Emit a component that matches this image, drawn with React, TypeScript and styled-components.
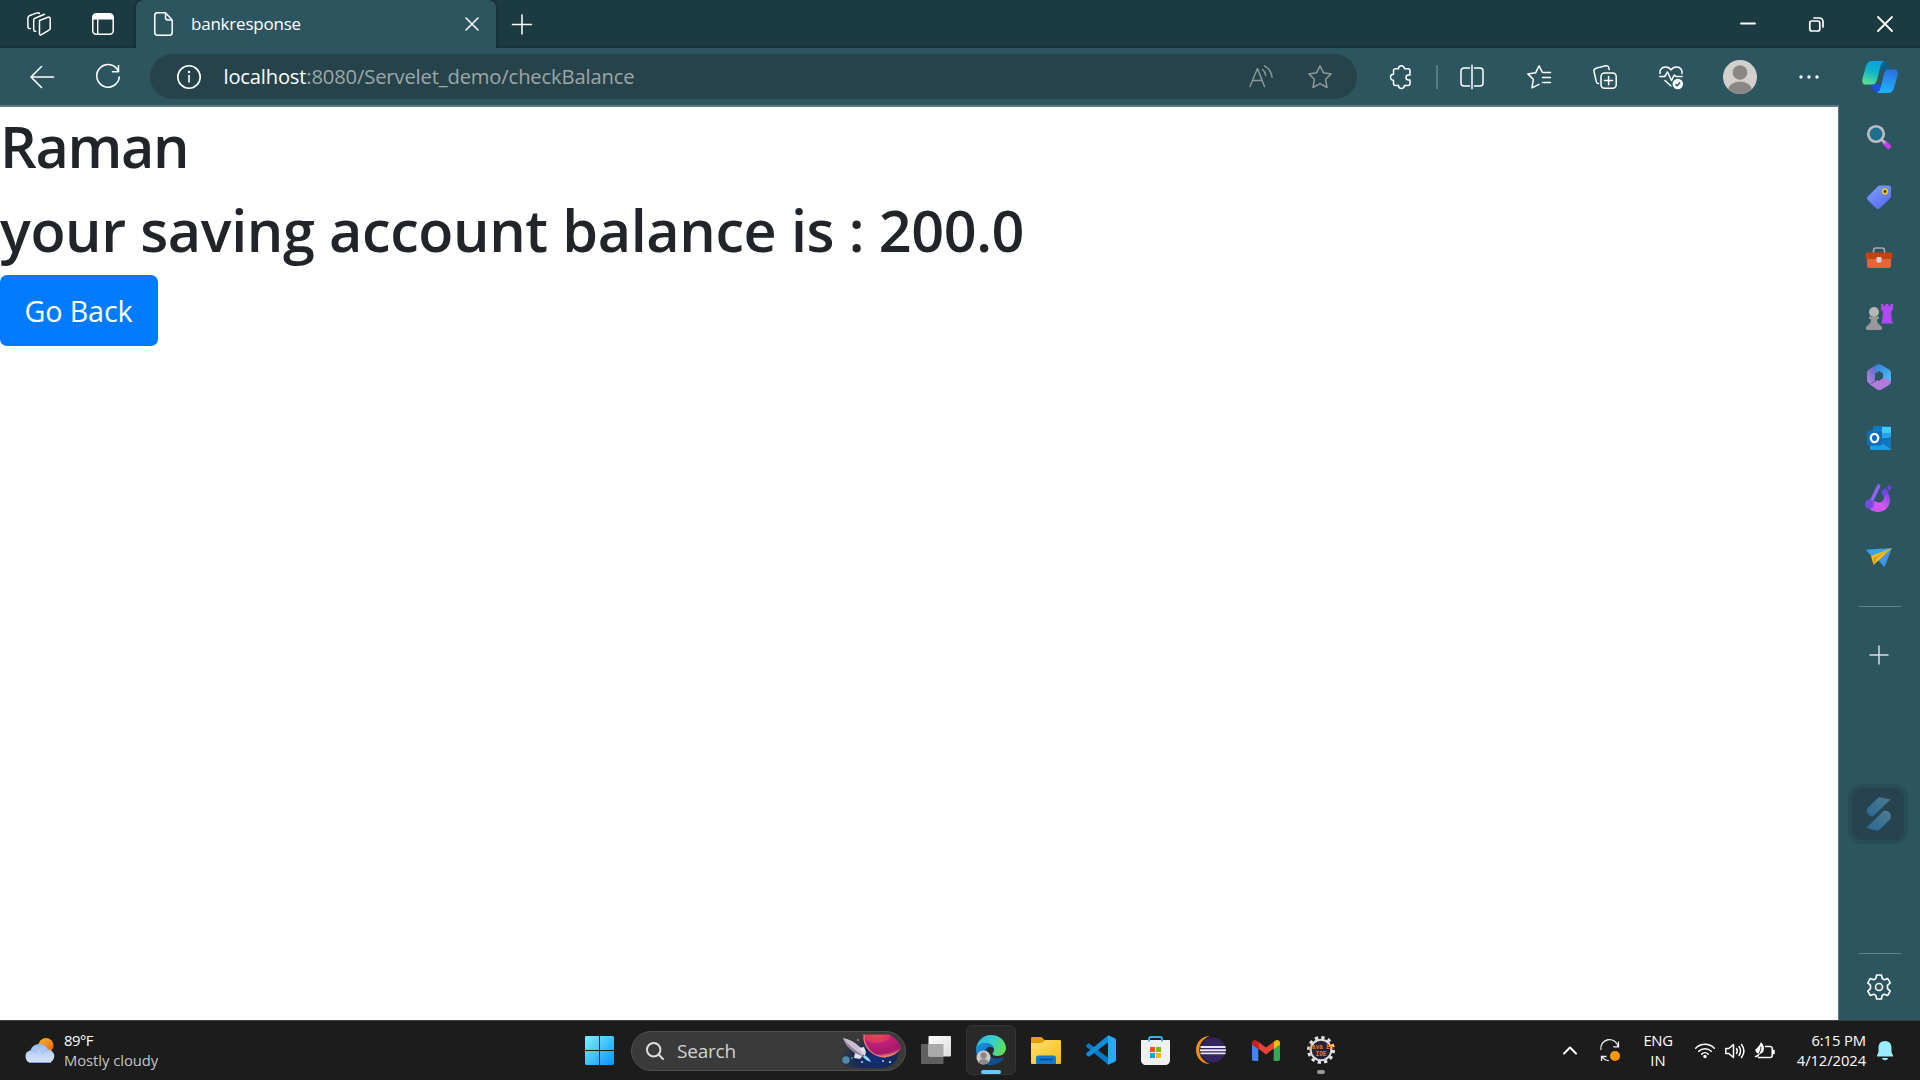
import React from "react";
import styled, { createGlobalStyle } from "styled-components";

const Global = createGlobalStyle`
  * { box-sizing: border-box; }
  body { margin: 0; overflow: hidden; background: #fff; font-family: "Open Sans", "Noto Sans", sans-serif; }
`;

const Screen = styled.div`
  width: 1920px;
  height: 1080px;
  display: flex;
  flex-direction: column;
  overflow: hidden;
`;

const Text = styled.span<{ $size: number; $color?: string; $ls?: number }>`
  font-size: ${(p) => p.$size}px;
  color: ${(p) => p.$color || "#fff"};
  letter-spacing: ${(p) => p.$ls || 0}px;
  white-space: nowrap;
`;

const Slot = styled.div<{ $w: number }>`
  width: ${(p) => p.$w}px;
  height: 100%;
  flex: none;
  display: flex;
  align-items: center;
  justify-content: center;
`;

const Svg = styled.svg<{ $w?: number; $h?: number }>`
  display: block;
  flex: none;
  width: ${(p) => p.$w || 24}px;
  height: ${(p) => p.$h || p.$w || 24}px;
  overflow: visible;
`;

const Line = styled(Svg)<{ $color?: string; $sw?: number }>`
  fill: none;
  stroke: ${(p) => p.$color || "#fff"};
  stroke-width: ${(p) => p.$sw || 1.5};
  stroke-linecap: round;
  stroke-linejoin: round;
`;

/* ---------- title bar ---------- */
const TitleBar = styled.header`
  height: 48px;
  flex: none;
  display: flex;
  background: linear-gradient(#1b3a41 0 44px, #17333a 48px);
`;

const Tab = styled.div`
  width: 360px;
  height: 48px;
  margin-left: 9px;
  padding: 0 18px;
  display: flex;
  align-items: center;
  background: #2d555f;
  border-radius: 8px 8px 0 0;
  box-shadow: 0 0 4px rgba(0, 0, 0, 0.4);
  clip-path: inset(0 -6px 0 -6px);
`;

const TabTitle = styled(Text)`
  flex: 1;
  margin-left: 18px;
  padding-bottom: 2px;
`;

const WindowControls = styled.div`
  display: flex;
  margin-left: auto;
`;

/* ---------- toolbar ---------- */
const Toolbar = styled.div`
  height: 57px;
  flex: none;
  display: flex;
  align-items: center;
  background: #2d555f;
`;

const AddressBar = styled.div`
  width: 1207px;
  height: 45px;
  margin: 0 11px 0 18px;
  padding: 0 7px 0 27px;
  display: flex;
  align-items: center;
  border-radius: 23px;
  background: #26434b;
`;

const Url = styled.div`
  flex: 1;
  margin-left: 22.5px;
  padding-bottom: 2px;
  display: flex;
`;

const Divider = styled.div`
  width: 2px;
  height: 24px;
  margin: 0 1px 0 2px;
  background: #5b7b83;
`;

/* ---------- body ---------- */
const Body = styled.div`
  height: 915px;
  flex: none;
  display: flex;
  background: #2d555f;
`;

const Page = styled.main`
  width: 1839px;
  border-top: 2px solid #5c7c85;
  border-right: 1px solid #5c7c85;
  background: #fff;
`;

const Heading = styled.h1<{ $size: number; $ls: number }>`
  margin: 0 0 12px;
  height: 72px;
  line-height: 79px;
  font-size: ${(p) => p.$size}px;
  font-weight: 570;
  letter-spacing: ${(p) => p.$ls}px;
  color: #212529;
  white-space: nowrap;
`;

const BackButton = styled.button`
  display: block;
  width: 158px;
  height: 71px;
  padding: 0 1px 0 0;
  border: 0;
  border-radius: 7px;
  background: #007bff;
  color: #fff;
  font: 400 28.8px "Open Sans", "Noto Sans", sans-serif;
  letter-spacing: -0.2px;
`;

const Sidebar = styled.aside`
  width: 81px;
  padding: 2px 2px 0 0;
  display: flex;
  flex-direction: column;
  align-items: center;
`;

const SideItem = styled.div<{ $h?: number }>`
  height: ${(p) => p.$h || 60.1}px;
  flex: none;
  display: flex;
  align-items: center;
  justify-content: center;
`;

const SideRule = styled.div<{ $mt: number }>`
  width: 42px;
  height: 1px;
  flex: none;
  margin-top: ${(p) => p.$mt}px;
  margin-left: 2px;
  background: #64838a;
`;

const Widget = styled.div`
  width: 60px;
  height: 60px;
  flex: none;
  margin-top: 80px;
  margin-right: 1px;
  border: 4px solid #294d58;
  border-radius: 14px;
  background: #26434f;
  display: flex;
  align-items: center;
  justify-content: center;
`;

/* ---------- taskbar ---------- */
const Taskbar = styled.footer`
  height: 60px;
  flex: none;
  display: flex;
  align-items: stretch;
  background: #1c1c1c;
  border-top: 1px solid #3b4040;
`;

const Weather = styled.div`
  width: 572px;
  padding-left: 25px;
  display: flex;
  align-items: center;
  gap: 9px;
`;

const Stack = styled.div<{ $align?: string }>`
  display: flex;
  flex-direction: column;
  align-items: ${(p) => p.$align || "flex-start"};
  line-height: 20px;
  padding-bottom: 2px;
`;

const SearchBox = styled.div`
  width: 275px;
  height: 40px;
  align-self: center;
  margin: 0 2px 0 4px;
  padding: 0 3px 0 14px;
  display: flex;
  align-items: center;
  border: 1px solid #505050;
  border-radius: 20px;
  background: #3a3a3a;
`;

const SearchLabel = styled(Text)`
  flex: 1;
  margin-left: 13px;
`;

const TaskButton = styled.div<{ $active?: boolean }>`
  position: relative;
  width: 50px;
  height: 50px;
  flex: none;
  margin: 4px 2.5px;
  border-radius: 6px;
  border: 1px solid ${(p) => (p.$active ? "#343434" : "transparent")};
  background: ${(p) => (p.$active ? "#292929" : "transparent")};
  display: flex;
  align-items: center;
  justify-content: center;
`;

const Indicator = styled.div<{ $w: number; $c: string }>`
  position: absolute;
  left: 50%;
  bottom: 0;
  width: ${(p) => p.$w}px;
  height: 4px;
  margin-left: -${(p) => p.$w / 2}px;
  border-radius: 2px;
  background: ${(p) => p.$c};
`;

const Tray = styled.div`
  margin-left: auto;
  display: flex;
  align-items: center;
`;

const Clock = styled(Stack)`
  width: 82px;
  margin-right: 11px;
`;

const Copilot = () => (
  <Svg $w={36} $h={32} viewBox="0 0 36 32">
    <defs>
      <linearGradient id="cp1" x1="0.6" y1="0" x2="0.3" y2="1"><stop stopColor="#0a9fe0" /><stop offset=".45" stopColor="#10b3c8" /><stop offset="1" stopColor="#5be08c" /></linearGradient>
      <linearGradient id="cp2" x1="0.6" y1="0" x2="0.4" y2="1"><stop stopColor="#2b6fe0" /><stop offset="1" stopColor="#1fb4ff" /></linearGradient>
    </defs>
    <path d="M18 0h4c3 0 4 2 4.700 5l1 4h-8l-4 1z" fill="#0b5f8c" />
    <path d="M8 23h8l4 2-3 7c-4 0-5-2-6-4z" fill="#1d4fd8" />
    <path d="M10 0h12c-2 1-3 3-4 7l-3 12c-1 3-2 4.500-5 4.500H4c-3 0-4.500-2-3.500-6L4 5c1-3.500 3-5 6-5z" fill="url(#cp1)" />
    <path d="M26 8.500h6c3 0 4.500 2 3.500 6L32 27c-1 3.500-3 5-6 5H15c2-1 3-3 4-7l3-12c1-3 2-4.500 4-4.500z" fill="url(#cp2)" />
  </Svg>
);

const SideSearch = () => (
  <Svg $w={24} viewBox="0 0 24 24">
    <path d="M17 17l6 6" stroke="#c43cf0" strokeWidth="5" />
    <path d="M15 15l3 3" stroke="#b8b8b8" strokeWidth="2.500" />
    <circle cx="9" cy="9" r="7.800" fill="#1f6f93" stroke="#bdbdbd" strokeWidth="2.600" />
  </Svg>
);
const Tag = () => (
  <Svg $w={24} viewBox="0 0 24 24">
    <defs><linearGradient id="tg" x1="0" y1="0" x2="0.6" y2="1"><stop stopColor="#7da4ff" /><stop offset="1" stopColor="#5b6cf5" /></linearGradient></defs>
    <path d="M13 .5h9c1.500 0 2 .7 2 2v8.500c0 1-.3 1.700-1 2.400L13 23c-1.300 1.200-3 1.200-4.200 0L1 15.200c-1.300-1.300-1.300-2.800 0-4L11 1.300c.6-.6 1.200-.8 2-.8z" fill="url(#tg)" />
    <circle cx="18" cy="6.500" r="2.300" fill="#443b2b" stroke="#f5c518" strokeWidth="1.700" />
  </Svg>
);
const Toolbox = () => (
  <Svg $w={28} $h={21} viewBox="0 0 28 21">
    <path d="M8.500 6V3.500c0-1.600.8-2.500 2.500-2.500h6c1.700 0 2.500.9 2.500 2.500V6" fill="none" stroke="#a9a9a9" strokeWidth="1.600" />
    <path d="M2 10h24v8.500c0 1.500-.8 2.500-2.500 2.500h-19C2.800 21 2 20 2 18.500z" fill="#ea6239" />
    <rect x="0.500" y="5.500" width="27" height="6.500" rx="1.500" fill="#c6420f" />
    <rect x="11.500" y="10" width="5" height="5.500" rx="1" fill="#d0d0d0" />
  </Svg>
);
const Chess = () => (
  <Svg $w={28} viewBox="0 0 28 28">
    <path d="M16 1h2.500v2h2V1h3v2h2V1H28v5.500l-2 2 .8 9 1.200 3H16l1.200-3 .8-9-2-2z" fill="#b048f5" />
    <circle cx="9" cy="9" r="5" fill="#b5b5b5" />
    <path d="M4 13.500h10v2l-2 1c0 3 1 4 4 6.500 1.300 1 1.500 4-.5 4h-13c-2 0-1.800-3-.5-4 3-2.500 4-3.500 4-6.500l-2-1z" fill="#999" />
  </Svg>
);
const Office = () => (
  <Svg $w={24} $h={26} viewBox="0 0 24 26">
    <defs>
      <linearGradient id="of1" x1="0" y1="0" x2="1" y2="1"><stop stopColor="#3a7bd5" /><stop offset="1" stopColor="#48c2f7" /></linearGradient>
      <linearGradient id="of2" x1="0" y1="1" x2="1" y2="0"><stop stopColor="#b488e0" /><stop offset="1" stopColor="#4d5fc4" /></linearGradient>
    </defs>
    <path d="M12 0c-1.500.3-3 1-4 2.300V17l-5 3-1.500-1C.5 18 0 17.200 0 16V9c0-1.600.7-2.800 2-3.600L9.500.8z" fill="url(#of2)" />
    <path d="M8 17.500l8-4.500 8-4.500v8.700c0 1.700-.7 2.900-2 3.700l-7.500 4.500c-1.500.8-3 .8-4.500 0L1.500 19.500C4 20.500 6 19 8 17.500z" fill="#b17adb" />
    <path d="M9.500.8C11 0 12.500 0 14 .8l8 4.600c1.300.8 2 2 2 3.600v6c0 1-.4 1.500-.8 2L16 13V9.500l-4-2.300-4 2.300V3c0-1 .5-1.700 1.500-2.200z" fill="url(#of1)" />
    <path d="M12 7.300l4 2.500V14l-4 3-4-2V9.800z" fill="#2d555f" />
  </Svg>
);
const Outlook = () => (
  <Svg $w={24} viewBox="0 0 24 24">
    <rect x="6" y="0" width="18" height="19" rx="1.500" fill="#0a78c2" />
    <path d="M6 4h9v7H6z" fill="#1598e0" /><path d="M15 1h9v6h-9z" fill="#43c8fa" /><path d="M15 7h9v5h-9z" fill="#22a5ea" />
    <path d="M3 23V12l12 4 9-5v11.500c0 1-.5 1.500-1.500 1.500H4z" fill="#1b9de2" /><path d="M11 15l13 8V11z" fill="#0f69ad" opacity=".75" />
    <rect x="0" y="4.500" width="15" height="15" rx="1.500" fill="#0f6cbd" />
    <ellipse cx="7.500" cy="12" rx="3.700" ry="4.100" fill="none" stroke="#fff" strokeWidth="2.300" />
  </Svg>
);
const Designer = () => (
  <Svg $w={27} $h={28} viewBox="0 0 27 28">
    <defs><linearGradient id="ds" x1="1" y1="0" x2="0" y2="1"><stop stopColor="#7645e8" /><stop offset=".5" stopColor="#d457f0" /><stop offset="1" stopColor="#c252ee" /></linearGradient></defs>
    <path d="M18.500 11c1 2.500.5 5-1.500 6.500-2.500 1.700-5 1-7-.5L2 21c1.500 4.300 6 7 11 7 7 0 12-5.500 12-12 0-3-1-5.500-2.500-7.500z" fill="url(#ds)" />
    <path d="M13.700 2L6 18" stroke="#8d63f5" strokeWidth="3.600" strokeLinecap="round" />
    <circle cx="4.500" cy="20" r="4.500" fill="#7a48e2" />
    <path d="M16 8l4-4 4 4-5 5z" fill="#7147e3" /><path d="M21.500 3.500l3-2.500 2.500 3-3 2.500z" fill="#6d43e0" />
  </Svg>
);
const Plane = () => (
  <Svg $w={26} $h={19} viewBox="0 0 26 19">
    <path d="M0 1.700L26 0 6 9z" fill="#35a5ed" />
    <path d="M26 0L10 10l8.500 9z" fill="#3f95e8" />
    <path d="M26 0L5 8l2.500 9z" fill="#f6bd1c" /><path d="M7.500 17L10 10 26 0 8 10z" fill="#cd8712" />
  </Svg>
);
const SIDE_APPS = [SideSearch, Tag, Toolbox, Chess, Office, Outlook, Designer, Plane];

const WeatherIcon = () => (
  <Svg $w={30} $h={25} viewBox="0 0 30 25">
    <defs>
      <linearGradient id="sn" x1="0" y1="0" x2=".6" y2="1"><stop stopColor="#f7b32b" /><stop offset="1" stopColor="#ee6a12" /></linearGradient>
      <linearGradient id="cl" x1="0" y1="0" x2="0" y2="1"><stop stopColor="#96b8ee" /><stop offset=".6" stopColor="#c3d7f7" /><stop offset="1" stopColor="#d9e5fa" /></linearGradient>
    </defs>
    <circle cx="21" cy="7.500" r="7.500" fill="url(#sn)" />
    <path d="M6.500 25a6.500 6.500 0 01-1-12.800A9.500 9.500 0 0123 11.500 6.800 6.800 0 0123.500 25z" fill="url(#cl)" />
    <path d="M17 16a7 7 0 016-4.500M6 12.500c3 0 5 1 6.500 3" fill="none" stroke="#8fb0e4" strokeWidth=".8" />
    <path d="M4 24.500h22" stroke="#7e9fdf" strokeWidth="1" />
  </Svg>
);

const StartIcon = () => (
  <Svg $w={29} viewBox="0 0 29 29">
    <defs><linearGradient id="wn" gradientUnits="userSpaceOnUse" x1="0" y1="0" x2="29" y2="29"><stop stopColor="#7cf0ff" /><stop offset="1" stopColor="#0a93fb" /></linearGradient></defs>
    <path d="M1 0h13v14H0V1zM15 0h13l1 1v13H15zM0 15h14v14H1l-1-1zM15 15h14v13l-1 1H15z" fill="url(#wn)" />
  </Svg>
);

const SpaceArt = () => (
  <Svg $w={62} $h={34} viewBox="0 0 62 34">
    <defs>
      <radialGradient id="sky" cx=".6" cy=".7" r=".6"><stop stopColor="#102e7c" /><stop offset=".55" stopColor="#152a5c" /><stop offset="1" stopColor="#152a5c" stopOpacity="0" /></radialGradient>
      <radialGradient id="pl" cx=".35" cy="0" r="1"><stop stopColor="#e0504c" /><stop offset=".35" stopColor="#d83564" /><stop offset=".4" stopColor="#c02076" /><stop offset=".85" stopColor="#a3186e" /><stop offset="1" stopColor="#f58a62" /></radialGradient>
    </defs>
    <path d="M0 0h42a17 17 0 010 34H0z" fill="url(#sky)" />
    <path d="M24 .5h25c6 3 10 7 12 13-2 5-8 9-15 9.500C33 23 23 13 24 .5z" fill="url(#pl)" />
    <path d="M24 .5c-1 13 9 22.500 22 22.500" fill="none" stroke="#f07a78" strokeWidth="1.300" />
    <path d="M3 4c6 1 12 4 17 9l5 6-4 5-6-5C9 15 5 10 3 4z" fill="#c9bfcf" />
    <path d="M3 4c3 6 7 11 12 15l6 5 2-2C15 16 8 11 3 4z" fill="#8a7b94" />
    <path d="M19 14l5-1 2 5-1 4zM15 19l-1 5 6 1 2-3z" fill="#e4dfe8" />
    <path d="M24 21c3 1 5 3 7 7-4-1-6-3-8-5z" fill="#8edcff" />
    <circle cx="6" cy="26" r="3.700" fill="#4e8cae" />
    <g fill="#d8d8e8"><circle cx="22" cy="28" r="1" /><circle cx="43" cy="27" r=".9" /><circle cx="50" cy="28" r="1.100" /><circle cx="12" cy="24" r=".7" /><circle cx="18" cy="6" r=".8" /></g>
  </Svg>
);

const TaskView = () => (
  <Svg $w={30} $h={28} viewBox="0 0 30 28">
    <defs><linearGradient id="tv" x1="0" y1="0" x2="1" y2="1"><stop stopColor="#fff" /><stop offset="1" stopColor="#dcdcdc" /></linearGradient></defs>
    <rect x="0" y="8" width="22.500" height="20" rx="1" fill="#606060" /><rect x="7.500" y="0" width="22.500" height="20.500" rx="1" fill="url(#tv)" />
    <path d="M7.500 8h15v12.500h-15z" fill="#aaa" />
  </Svg>
);
const EdgeIcon = () => (
  <Svg $w={30} viewBox="0 0 30 30">
    <defs>
      <linearGradient id="e1" x1="0" y1=".3" x2="1" y2=".6"><stop stopColor="#29b6ed" /><stop offset=".5" stopColor="#3bccd0" /><stop offset="1" stopColor="#62e04e" /></linearGradient>
      <linearGradient id="e2" x1="0" y1="0" x2=".6" y2="1"><stop stopColor="#1a9ce8" /><stop offset="1" stopColor="#0f58a8" /></linearGradient>
    </defs>
    <path d="M0 14C1 6 7 0 15 0c9 0 15 6.500 15 13 0 5-4 8-8.500 8-3.500 0-5-1.200-5-2.300 0-.8 1.500-1.700 1.500-4C18 11 14 8 9 8c-4 0-7 2-9 6z" fill="url(#e1)" />
    <path d="M0 14c2-4 5.500-6 9-6 5 0 9 3 9 6.700-.2-1.700-2-2.700-4-2.700-3.500 0-5.500 3-5.500 6.500 0 5 4 9.500 9.500 11.200-1 .2-2 .3-3 .3C6.500 30 0 23.500 0 14z" fill="url(#e2)" />
    <path d="M11 13c-1.500 1.500-2.500 3.500-2.500 5.500 0 6 5 10 9.500 11.200 4-1 7.500-3 9.700-6.500.5-.8-.2-1.300-.8-1C20 25.500 11 23 11 13z" fill="#124f91" />
    <circle cx="7.500" cy="22.500" r="7" fill="#cbc9c7" /><circle cx="7.500" cy="20.500" r="3.200" fill="#8b8886" /><path d="M2.500 27c1.500-4 8.500-4 10 0-2.500 3.200-7.500 3.200-10 0z" fill="#8b8886" />
  </Svg>
);
const Explorer = () => (
  <Svg $w={30} $h={27} viewBox="0 0 30 27">
    <defs><linearGradient id="fx" x1="0" y1="0" x2="1" y2="1"><stop stopColor="#ffdf70" /><stop offset="1" stopColor="#fbb917" /></linearGradient></defs>
    <path d="M0 1.500C0 .5.500 0 1.500 0h9l3 3v6H0z" fill="#e2a006" />
    <path d="M0 6h11l3-3h14.500c1 0 1.500.5 1.500 1.500v21c0 1-.5 1.500-1.500 1.500h-27C.5 27 0 26.500 0 25.500z" fill="url(#fx)" />
    <path d="M5 27v-6c0-1.500 1-2.500 2.500-2.500h15c1.500 0 2.500 1 2.500 2.500v6z" fill="#0f78cf" /><path d="M9 22.500h12" stroke="#064a8c" strokeWidth="1.300" strokeLinecap="round" />
  </Svg>
);
const VsCode = () => (
  <Svg $w={30} viewBox="0 0 30 30">
    <path d="M0 10.500l2-1.800c.6-.5 1.200-.4 1.700 0L22.500 23v7L.3 11.800C-.1 11.400-.2 10.900 0 10.500z" fill="#0879c4" />
    <path d="M0 19.500l2 1.800c.6.500 1.200.4 1.700 0L22.500 7V0L.3 18.200c-.4.400-.5.900-.3 1.300z" fill="#118ddb" />
    <path d="M22 .2L28.500 3c1 .5 1.500 1.200 1.500 2.200v19.600c0 1-.5 1.700-1.500 2.200L22 29.800z" fill="#2aa9f3" />
  </Svg>
);
const Store = () => (
  <Svg $w={29} viewBox="0 0 29 29">
    <path d="M1 4h27c.7 0 1 .3 1 1v19c0 3-2 5-5 5H5c-3 0-5-2-5-5V5c0-.7.3-1 1-1z" fill="#f1f1f1" />
    <path d="M8 5.500V3c0-1.300.7-2 2-2h9c1.300 0 2 .7 2 2v2.500" fill="none" stroke="#30b5ea" strokeWidth="1.900" />
    <path d="M9 11h5v5H9z" fill="#f25022" /><path d="M15 11h5v5h-5z" fill="#7fba00" /><path d="M9 17h5v5H9z" fill="#00a4ef" /><path d="M15 17h5v5h-5z" fill="#ffb900" />
  </Svg>
);
const Eclipse = () => (
  <Svg $w={30} $h={28} viewBox="0 0 30 28">
    <path d="M14 0C6 0 0 6 0 14s6 14 14 14C7 25.500 3.300 20 3.300 14S7 2.500 14 0z" fill="#f28c1c" />
    <circle cx="17" cy="14" r="12.500" fill="#33245f" />
    <path d="M4.500 11h25M4 14.200h26M4.500 17.400h25" stroke="#e6e4ee" strokeWidth="1.900" />
  </Svg>
);
const Gmail = () => (
  <Svg $w={28} $h={21} viewBox="0 0 28 21">
    <path d="M0 4l6.300 4.500V21H2c-1.300 0-2-.8-2-2z" fill="#4285f4" /><path d="M28 4l-6.300 4.500V21H26c1.300 0 2-.8 2-2z" fill="#34a853" />
    <path d="M6.300 8.500V1.800L14 7.600l7.700-5.800v6.700L14 14.500z" fill="#ea4335" />
    <path d="M0 4V3c0-2.500 2.800-4 4.900-2.300l1.400 1.100v7.400L0 4.500z" fill="#c5221f" /><path d="M28 4V3c0-2.500-2.800-4-4.900-2.300l-1.400 1.100v7.400L28 4.500z" fill="#fbbc04" />
  </Svg>
);
const JavaEE = () => (
  <Svg $w={28} viewBox="0 0 28 28">
    <circle cx="14" cy="14" r="12.500" fill="none" stroke="#e5e5e5" strokeWidth="3" strokeDasharray="3.270 3.270" />
    <circle cx="14" cy="14" r="10.300" fill="#282036" stroke="#dcdcdc" strokeWidth="2" />
    <g fontFamily="Liberation Mono, monospace" fontWeight="700" fill="#e77a1c" textAnchor="middle"><text x="14" y="13" fontSize="7" textLength="25" lengthAdjust="spacingAndGlyphs">Java EE</text><text x="14" y="19.500" fontSize="7" textLength="11" lengthAdjust="spacingAndGlyphs">IDE</text></g>
  </Svg>
);

const dim = "#8d9698";

export default function App() {
  return (
    <>
      <Global />
      <Screen>
        <TitleBar>
          <Slot $w={78}>
            <Line viewBox="0 0 24 24">
              <path d="M12.500 8.500l8.500-3.300c1.300-.5 2.200.2 2.200 1.400v9.600c0 .9-.4 1.500-1.200 1.900l-7.500 4.600c-1.100.7-2 .1-2-1z" />
              <path d="M8.800 19.300c-1 .2-2.100-.1-2.100-1.600V8.300c0-1 .5-1.700 1.300-2.100l9.500-3.900M3.200 16.500c-1.500.2-2.300-.5-2.300-1.900V6c0-1 .4-1.700 1.300-2.200L10 .9c1-.4 1.800-.3 2.500.5" />
            </Line>
          </Slot>
          <Slot $w={49}>
            <Svg $w={22} viewBox="0 0 22 22">
              <rect x=".8" y=".8" width="20.400" height="20.400" rx="3.500" fill="none" stroke="#fff" strokeWidth="1.500" />
              <path d="M1 6.500V4a3 3 0 013-3h14a3 3 0 013 3v2.500z" fill="#fff" /><path d="M5.700 6v15" stroke="#fff" strokeWidth="1.400" />
            </Svg>
          </Slot>
          <Tab>
            <Line $w={19} $h={24} viewBox="0 0 19 24"><path d="M11.500.8H3.500C1.800.8.8 1.800.8 3.500v17c0 1.700 1 2.700 2.700 2.700h12c1.700 0 2.700-1 2.700-2.700V8z M11.500.8V5.500C11.500 7.200 12.300 8 14 8h4.200" /></Line>
            <TabTitle $size={17} $ls={-0.22}>bankresponse</TabTitle>
            <Line $w={12} viewBox="0 0 12 12"><path d="M0 0l12 12M12 0L0 12" /></Line>
          </Tab>
          <Slot $w={52}><Line $w={20} $h={19} viewBox="0 0 20 20" $sw={1.6}><path d="M10 0v20M0 10h20" /></Line></Slot>
          <WindowControls>
            <Slot $w={69}><Line $w={14} viewBox="0 0 14 14" $sw={1.8}><path d="M0 6.500h14" /></Line></Slot>
            <Slot $w={68}><Line $w={15} viewBox="0 0 15 15" $sw={1.7}><rect x=".8" y="4" width="10" height="10" rx="2" /><path d="M5 1h5.500A3.500 3.500 0 0114 4.500V10" /></Line></Slot>
            <Slot $w={70}><Line $w={14} viewBox="0 0 14 14" $sw={1.8}><path d="M0 0l14 14M14 0L0 14" /></Line></Slot>
          </WindowControls>
        </TitleBar>
        <Toolbar>
          <Slot $w={84}><Line viewBox="0 0 24 24" $sw={1.6}><path d="M23.500 12H1M11.500 1.500L1 12l10.500 10.500" /></Line></Slot>
          <Slot $w={48}><Line viewBox="0 0 24 24" $sw={1.6}><path d="M22.500 6.500A11.300 11.300 0 1023.300 12M22.500.8v6h-6" /></Line></Slot>
          <AddressBar>
            <Line viewBox="0 0 24 24" $sw={1.6}><circle cx="12" cy="12" r="11.200" /><path d="M12 10.500v6.500" /><circle cx="12" cy="7" r=".5" /></Line>
            <Url><Text $size={20.2} $ls={-0.2}>localhost</Text><Text $size={20.2} $ls={-0.15} $color="#9ea6a8">:8080/Servelet_demo/checkBalance</Text></Url>
            <Slot $w={59}><Line $color={dim} viewBox="0 0 24 24"><path d="M1 21.500L8.500 3.500 15.500 21.500M3.800 15.500h9.300M13.500 4.500c2 1.500 3 3.500 3.200 6M15.500.8c4.500 2.500 7 6.500 7.500 11.500" /></Line></Slot>
            <Slot $w={60}><Line $color={dim} viewBox="0 0 24 24"><path d="M12 .8l3.500 7 7.700 1.100-5.600 5.400 1.400 8.200-7-3.900-7 3.900 1.400-8.200L.8 8.900l7.700-1.100z" /></Line></Slot>
          </AddressBar>
          <Slot $w={66}><Line viewBox="0 0 24 24"><path d="M9.500 3.800a3 3 0 016 0h3.500a2 2 0 012 2v4.200h-1.500a2.500 2.500 0 000 5H21v3.500a2 2 0 01-2 2h-3.500a3 3 0 01-6 0H6.500a2 2 0 01-2-2V15.300a3 3 0 010-6V5.800a2 2 0 012-2z" /></Line></Slot>
          <Divider />
          <Slot $w={66}><Line viewBox="0 0 24 24"><path d="M9.500 3H4a3 3 0 00-3 3v12a3 3 0 003 3h5.500M14.500 3H20a3 3 0 013 3v12a3 3 0 01-3 3h-5.500M12 .3v23.400" /></Line></Slot>
          <Slot $w={68}><Line viewBox="0 0 24 24"><path d="M23.500 7.500H15.500L12 .8 8.600 7.800.8 8.900l5.500 5.400L5 22.800l7-3.500M15.500 12.500h8M15.500 17.500h8" /></Line></Slot>
          <Slot $w={64}><Line viewBox="0 0 24 24"><rect x="8" y="8" width="15.200" height="15.200" rx="3.500" /><path d="M15.600 11.500v8.200M11.500 15.600h8.200M5.500 18.500c-1.200.2-1.900-.5-2.200-1.800L1 6.500C.7 4.900 1.500 3.800 3 3.300l9.500-2.500c1.600-.4 2.900.3 3.300 1.800l.4 2" /></Line></Slot>
          <Slot $w={67}><Line viewBox="0 0 24 24"><path d="M1 8.500C.5 5 2.500 2 6.300 2 9 2 11 3.200 12 5c1-1.800 3-3 5.700-3 3.800 0 5.800 3 5.300 6.500M.8 11.500h5l2.700-4.500 4 8.500 2.700-5.500 1.800 1.500h6M6 15.500l6 5.500" /><circle cx="18.800" cy="19" r="4.500" fill="#fff" /><path d="M16.800 19.700l1.300 1 2.700-3" stroke="#2d555f" /></Line></Slot>
          <Slot $w={72}><Svg $w={34} viewBox="0 0 34 34"><defs><clipPath id="av"><circle cx="17" cy="17" r="17" /></clipPath></defs><g clipPath="url(#av)"><path d="M0 0h34v34H0z" fill="#d2d0ce" /><circle cx="17" cy="12.500" r="7.300" fill="#8a8886" /><ellipse cx="17" cy="31" rx="12" ry="9.500" fill="#8a8886" /></g></Svg></Slot>
          <Slot $w={66}><Svg $w={20} $h={4} viewBox="0 0 20 4"><g fill="#fff"><circle cx="2" cy="2" r="1.700" /><circle cx="10" cy="2" r="1.700" /><circle cx="18" cy="2" r="1.700" /></g></Svg></Slot>
          <Slot $w={76}><Copilot /></Slot>
        </Toolbar>
        <Body>
          <Page>
            <Heading $size={57.5} $ls={-1.3}>Raman</Heading>
            <Heading $size={57.5} $ls={-0.38}>your saving account balance is : 200.0</Heading>
            <BackButton>Go Back</BackButton>
          </Page>
          <Sidebar>
            {SIDE_APPS.map((Item, i) => <SideItem key={i}><Item /></SideItem>)}
            <SideRule $mt={18} />
            <SideItem $h={97}><Line $w={18} viewBox="0 0 18 18" $color="#d5dddf"><path d="M9 0v18M0 9h18" /></Line></SideItem>
            <Widget>
              <Svg $w={25} $h={34} viewBox="0 0 25 34">
                <defs><linearGradient id="wg" x1="1" y1="0" x2="0" y2="1"><stop stopColor="#4e7c8e" /><stop offset="1" stopColor="#2a6896" /></linearGradient></defs>
                <path d="M13 0l11.500 2.500L7 19.500C2 19.500-1 14 2 10.500z" fill="url(#wg)" /><path d="M18 13.500c6 0 9 5 5.500 9.500L12 34 0 31z" fill="url(#wg)" />
              </Svg>
            </Widget>
            <SideRule $mt={109} />
            <SideItem $h={66}>
              <Line $w={26} viewBox="0 0 26 26" $sw={1.6}>
                <circle cx="13" cy="13" r="3.500" />
                <path d="M10.600 1h4.800l.8 3.600 2 1.100 3.600-1.100 2.400 4.200-2.700 2.600v3.200l2.700 2.600-2.400 4.200-3.600-1.100-2 1.100-.8 3.600h-4.800l-.8-3.600-2-1.100-3.600 1.100-2.400-4.200 2.700-2.600v-3.200L1.800 8.800l2.400-4.200 3.600 1.100 2-1.100z" />
              </Line>
            </SideItem>
          </Sidebar>
        </Body>
        <Taskbar>
          <Weather>
            <WeatherIcon />
            <Stack><Text $size={14.8} $ls={-0.5}>89°F</Text><Text $size={14.8} $ls={-0.05} $color="#c4c4c4">Mostly cloudy</Text></Stack>
          </Weather>
          <Slot $w={55}><StartIcon /></Slot>
          <SearchBox>
            <Line $w={18} viewBox="0 0 18 18" $sw={2} $color="#dedede"><circle cx="7.700" cy="7.700" r="6.700" /><path d="M12.500 12.500L17 17" /></Line>
            <SearchLabel $size={19} $color="#d2d2d2" $ls={-0.2}>Search</SearchLabel>
            <SpaceArt />
          </SearchBox>
          <TaskButton><TaskView /></TaskButton>
          <TaskButton $active><EdgeIcon /><Indicator $w={20} $c="#60cdff" /></TaskButton>
          <TaskButton><Explorer /></TaskButton>
          <TaskButton><VsCode /></TaskButton>
          <TaskButton><Store /></TaskButton>
          <TaskButton><Eclipse /></TaskButton>
          <TaskButton><Gmail /></TaskButton>
          <TaskButton><JavaEE /><Indicator $w={8} $c="#9a9a9a" /></TaskButton>
          <Tray>
            <Slot $w={40}><Line $w={12} $h={7} viewBox="0 0 12 7" $sw={2}><path d="M0 6.500l6-6 6 6" /></Line></Slot>
            <Slot $w={40}>
              <Svg $w={20} viewBox="0 0 20 20"><path d="M1 9A8.500 8.500 0 0118 5.500M18.500.5v5.300h-5.300M6.500 15.500H1.500V20M1.800 15.500c1.500 2.500 4 4 7 4.200" fill="none" stroke="#eee" strokeWidth="1.300" /><circle cx="15" cy="15" r="5" fill="#ff9800" /></Svg>
            </Slot>
            <Slot $w={56}><Stack $align="center"><Text $size={14.8} $ls={-0.3}>ENG</Text><Text $size={14.8}>IN</Text></Stack></Slot>
            <Slot $w={38}>
              <Line $w={20} $h={15} viewBox="0 0 20 15"><path d="M.7 5.200a13.200 13.200 0 0118.600 0M3.700 8.300a9 9 0 0112.600 0M6.700 11.200a4.700 4.700 0 016.600 0" /><circle cx="10" cy="13.500" r="1" fill="#fff" /></Line>
            </Slot>
            <Slot $w={22}>
              <Line $w={20} $h={16} viewBox="0 0 20 16"><path d="M.8 5.500v5h3l4.700 4V1.500L3.800 5.500zM11.500 5.500c1 1.500 1 3.500 0 5M14 3.500c2 2.500 2 6.500 0 9M16.500 1.500c3 4 3 9 0 13" /></Line>
            </Slot>
            <Slot $w={38}>
              <Line $w={20} $h={17} viewBox="0 0 20 17"><path d="M10.500 4.500h4.700a2 2 0 012 2v7a2 2 0 01-2 2H3.500M19 8.500v3M18.500 8.500v3" /><path d="M6 0c1 1.500 3 3 3 6.500 0 3-1.500 5-4 5.500C2 12 .3 10 .3 7.300 2 6.500 4.500 4 6 0z" fill="#fff" stroke="none" /><path d="M.5 14.500c1.500 0 3-1 3.500-3" /><path d="M4 11.500C5 9.500 6 7.500 6 5" stroke="#1c1c1c" strokeWidth="1" /></Line>
            </Slot>
            <Clock $align="flex-end"><Text $size={14.8} $ls={-0.1}>6:15 PM</Text><Text $size={14.8} $ls={-0.1}>4/12/2024</Text></Clock>
            <Svg $w={16} $h={20} viewBox="0 0 16 20"><path d="M8 0c4 0 6.500 2.800 6.500 6.500V11l1.500 3.500v1H0v-1L1.500 11V6.500C1.500 2.800 4 0 8 0zM5 17h6c-.5 3-5.500 3-6 0z" fill="#99ebff" /></Svg>
            <Slot $w={27} />
          </Tray>
        </Taskbar>
      </Screen>
    </>
  );
}
